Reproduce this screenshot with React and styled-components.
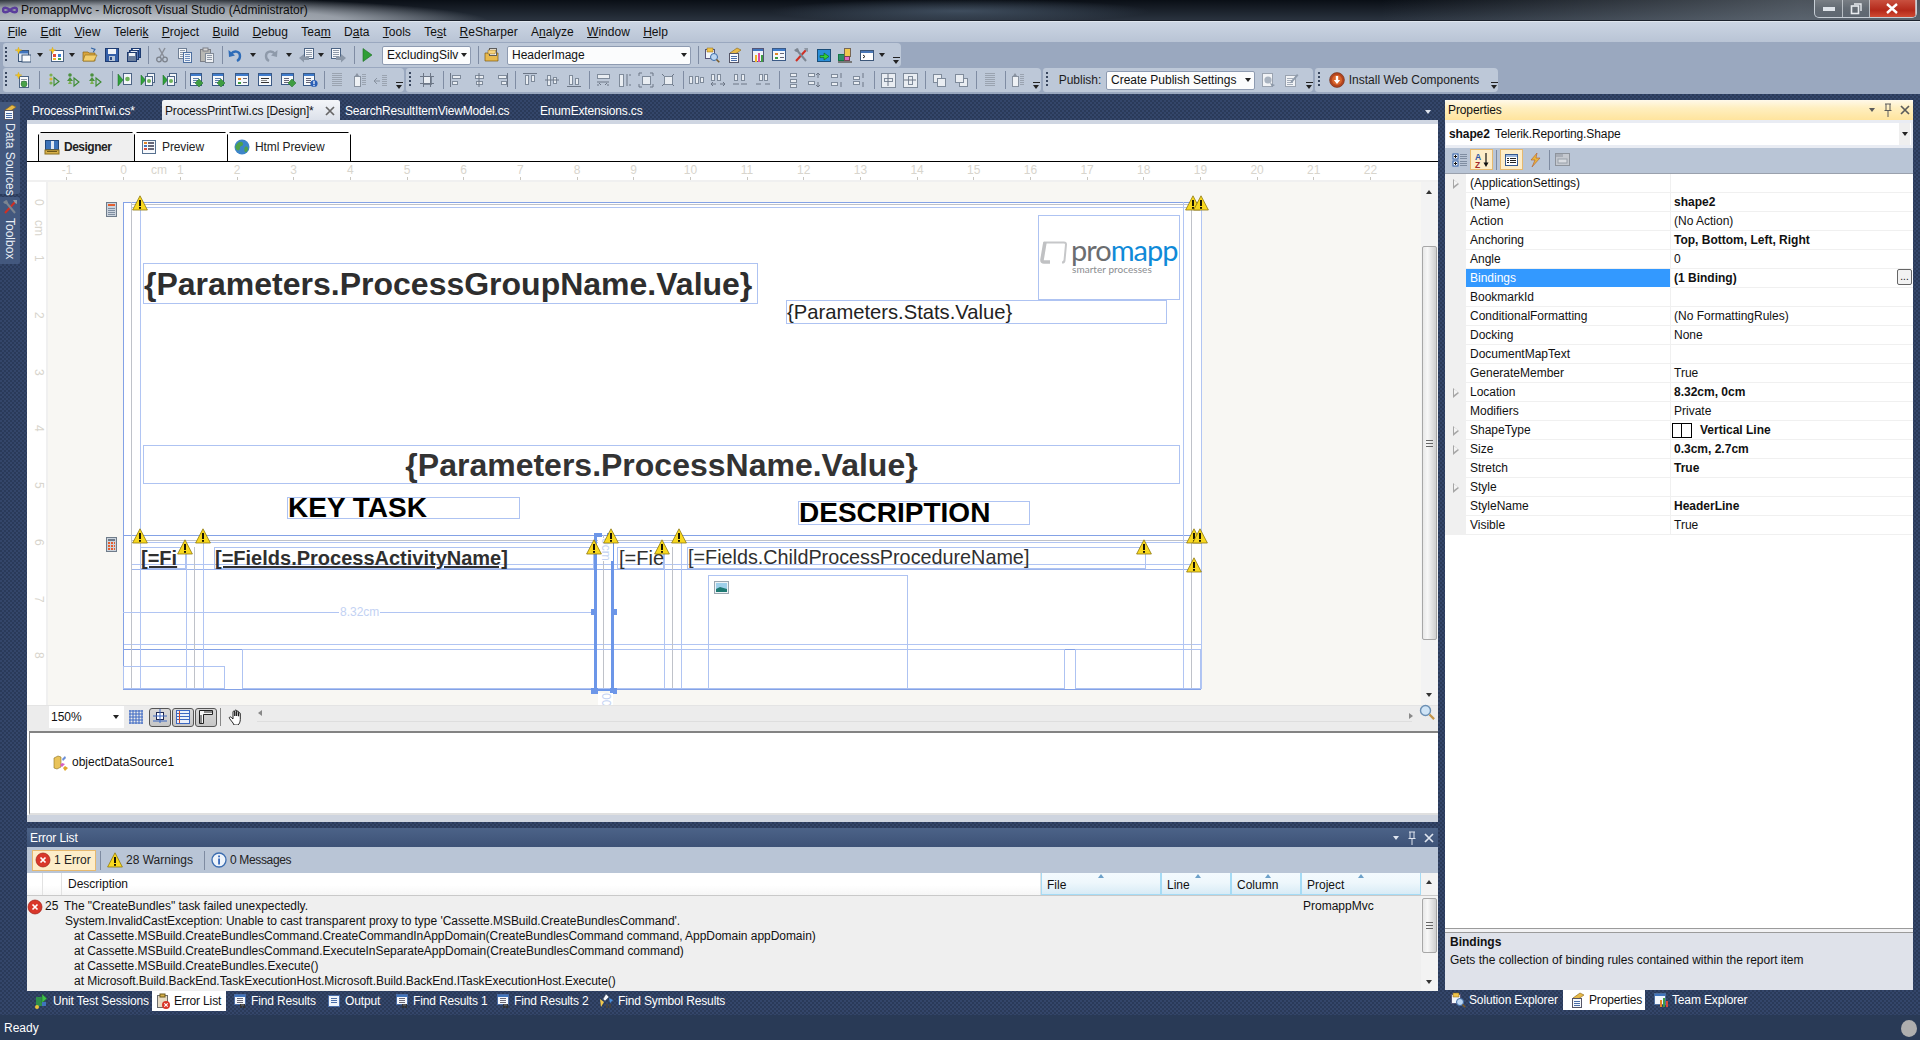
import React from 'react';
import styled, { createGlobalStyle } from 'styled-components';

const UI = '"Liberation Sans", Arial, sans-serif';

const Global = createGlobalStyle`
  html, body { margin: 0; padding: 0; background: #2b3b5a; }
  body { font-family: ${UI}; font-size: 12px; overflow: hidden; }
  * { box-sizing: border-box; }
`;

const DOCK = `
  background-color: #2a3a59;
  background-image:
    linear-gradient(45deg, #34466a 25%, transparent 25%, transparent 75%, #34466a 75%),
    linear-gradient(45deg, #34466a 25%, transparent 25%, transparent 75%, #34466a 75%);
  background-size: 4px 4px;
  background-position: 0 0, 2px 2px;
`;

/* ---------- window chrome ---------- */
const Shell = styled.div`
  width: 1920px; height: 1040px; display: flex; flex-direction: column; overflow: hidden; position: relative;
`;
const TitleBar = styled.div`
  height: 22px; flex: none; position: relative; display: flex; align-items: center; padding: 0 0 2px 2px; gap: 3px;
  border-bottom: 1px solid #dfe6ee;
  box-shadow: inset 0 -1px 0 #1b222c;
  background:
    radial-gradient(ellipse 380px 26px at 110px 22px, rgba(205,210,216,.95), rgba(190,196,204,.75) 62%, rgba(150,160,170,0) 100%),
    radial-gradient(ellipse 190px 12px at 960px 11px, rgba(92,112,134,.55), rgba(92,112,134,0)),
    linear-gradient(to right, rgba(130,140,150,0) 1380px, rgba(130,140,150,.55) 1800px) ,
    linear-gradient(#0a0f16, #2b3440);
`;
const TitleText = styled.span`font-size: 12px; letter-spacing: .03px; color: #0c0c0c; white-space: nowrap;`;
const WinButtons = styled.div`
  position: absolute; right: 3px; top: 0; width: 103px; height: 18px; display: flex;
  border: 1px solid #c7ced6; border-top: 0; border-radius: 0 0 5px 5px; overflow: hidden;
`;
const WinBtn = styled.div`
  width: ${p => p.$w}px; height: 100%; display: flex; align-items: center; justify-content: center;
  color: #fff; border-right: 1px solid rgba(220,225,230,.7);
  background: ${p => p.$red ? 'linear-gradient(#c9503f, #b4291a 60%, #d04a33)' : 'linear-gradient(rgba(255,255,255,.25), rgba(255,255,255,.1) 50%, rgba(255,255,255,.04))'};
`;
const MenuBar = styled.div`
  height: 20px; flex: none; padding-left: 1px; display: flex; align-items: center;
  background: linear-gradient(#cbd5e3, #b9c4d5);
`;
const MenuItem = styled.span`padding: 0 ${p => p.$p ?? 6.7}px; color: #111; font-size: 12px; white-space: nowrap;`;
const ToolArea = styled.div`
  height: 52px; flex: none; background: #9aa8bf; padding: 1px 0 0 3px; display: flex; flex-direction: column; gap: 1px;
`;
const ToolRow = styled.div`display: flex; gap: 2px; height: 24px;`;
const Band = styled.div`
  width: ${p => p.$w}px; height: 24px; display: flex; align-items: center; position: relative;
  background: #bdc8d8; border-radius: 3px 4px 4px 3px;
`;
const Cell = styled.div`
  flex: none; height: 100%; display: flex; align-items: center; justify-content: center; color: #1d1d1d; font-size: 12px; white-space: nowrap;
`;
const Sep = styled.div`width: 1px; height: 18px; background: #7f8ca3;`;
const Grip = styled.div`
  width: 2px; height: 16px;
  background: repeating-linear-gradient(#39475f 0 2px, transparent 2px 4px);
`;
const Combo = styled.div`
  width: 100%; height: 19px; background: #fbfcfd; border: 1px solid #8e9bb1; border-radius: 2px; display: flex; align-items: center; justify-content: space-between; padding: 0 3px 0 4px; font-size: 12px; color: #111;
`;
const Caret = styled.i`
  width: 0; height: 0; display: inline-block; flex: none; border-left: 3px solid transparent; border-right: 3px solid transparent; border-top: 4px solid ${p => p.$c || '#222'};
`;
const Over = styled.div`
  align-self: flex-end; margin-bottom: 3px; width: 7px; height: 7px; border-top: 1px solid #222; position: relative;
  &::after { content: ''; position: absolute; left: 0; top: 2px; border-left: 3.5px solid transparent; border-right: 3.5px solid transparent; border-top: 4px solid #222; }
`;

/* ---------- dock ---------- */
const Dock = styled.div`
  flex: 1; min-height: 0; display: flex; ${DOCK} padding-top: 6px;
`;
const Rail = styled.div`width: 27px; flex: none; display: flex; flex-direction: column; gap: 3px; padding-top: 2px;`;
const RailTab = styled.div`
  width: 20px; height: ${p => p.$h}px; background: #43587e; color: #e8edf5; font-size: 12px; border-radius: 0 2px 2px 0;
  display: flex; flex-direction: column; align-items: center; gap: 3px; padding-top: 2px;
  span { writing-mode: vertical-rl; white-space: nowrap; }
`;
const CenterCol = styled.div`width: 1411px; flex: none; display: flex; flex-direction: column;`;
const RightCol = styled.div`width: 468px; flex: none; margin-left: 7px; display: flex; flex-direction: column;`;

const DocPane = styled.div`height: 722px; flex: none; display: flex; flex-direction: column;`;
const DocTabs = styled.div`height: 20px; flex: none; display: flex; align-items: center; position: relative;`;
const DocTab = styled.div`
  width: ${p => p.$w}px; height: 20px; flex: none; display: flex; align-items: center; justify-content: space-between;
  padding: 1px 3px 0 ${p => p.$pl}px; font-size: 12px; letter-spacing: -0.17px; white-space: nowrap;
  color: ${p => p.$on ? '#141414' : '#fff'};
  background: ${p => p.$on ? 'linear-gradient(#f4f6f9, #dce1ea)' : 'transparent'};
  border-radius: 2px 2px 0 0;
`;
const TabMenu = styled.div`position: absolute; right: 7px; top: 10px; line-height: 0;`;
const DocBody = styled.div`flex: 1; min-height: 0; display: flex; flex-direction: column; background: #fff; border-top: 4px solid #cfd6e2; border-bottom: 7px solid #ced4df;`;
const ViewTabs = styled.div`
  height: 38px; flex: none; display: flex; align-items: flex-end; padding-left: 11px; border-bottom: 1px solid #000;
`;
const ViewTab = styled.div`
  width: ${p => p.$w}px; height: 29px; display: flex; align-items: center; gap: ${p => p.$on ? 4 : 5}px; padding-left: ${p => p.$on ? 5 : 6}px; font-size: 12px; color: #222;
  font-weight: ${p => p.$on ? 700 : 400}; letter-spacing: ${p => p.$on ? '-.5px' : '-.1px'};
  background: ${p => p.$on ? '#efefef' : '#fff'};
  border: 1px solid #000; border-bottom: 0; margin-right: -1px;
  clip-path: polygon(3px 0, calc(100% - 3px) 0, 100% 3px, 100% 100%, 0 100%, 0 3px);
`;
const RulerRow = styled.div`
  height: 20px; flex: none; position: relative; display: flex; padding-left: 11.66px; border-bottom: 2px solid #f0f0f0; background: #fff;
`;
const RulerCell = styled.div`
  width: 56.68px; flex: none; display: flex; flex-direction: column; align-items: center; color: #d8d5cd; font-size: 12px; line-height: 14px; padding-top: 1px;
  &::after { content: ''; width: 1px; height: 3px; background: #c9c6bf; }
`;
const RulerCm = styled.span`position: absolute; left: 124px; top: 1px; color: #d8d5cd; font-size: 12px; line-height: 14px;`;
const CanvasRow = styled.div`flex: 1; min-height: 0; display: flex;`;
const SideRuler = styled.div`
  width: 21px; flex: none; border-right: 2px solid #f0f0f0; position: relative; overflow: hidden;
`;
const SideCell = styled.div`
  height: 56.72px; display: flex; align-items: center; gap: 2px; padding-left: 5px; color: #d8d5cd; font-size: 12px;
  &:first-child { margin-top: -8.5px; }
  span { writing-mode: vertical-rl; width: 13px; line-height: 13px; }
  &::after { content: ''; width: 3px; height: 1px; background: #c9c6bf; }
`;
const SideCm = styled.span`position: absolute; left: 5px; top: 38px; color: #d8d5cd; font-size: 12px; writing-mode: vertical-rl; line-height: 13px;`;
const Canvas = styled.div`flex: 1; min-width: 0; background: #f8f7f3; position: relative; overflow: hidden;`;
const VScroll = styled.div`
  width: ${p => p.$w || 17}px; flex: none; background: #f3f3f3; position: relative;
`;
const ScrollThumb = styled.div`
  position: absolute; left: 1px; right: 1px; top: ${p => p.$t}px; height: ${p => p.$h}px; border: 1px solid #a7a7a7; border-radius: 2px;
  background: linear-gradient(to right, #e8e8e8, #f7f7f7 35%, #cfcfcf);
  display: flex; align-items: center; justify-content: center;
  &::after { content: ''; width: 7px; height: 7px; background: repeating-linear-gradient(#666 0 1px, transparent 1px 3px); }
`;
const ScrollUp = styled.div`
  position: absolute; left: 5px; top: ${p => p.$t}px; border-left: 3.5px solid transparent; border-right: 3.5px solid transparent; border-bottom: 4px solid #333;
`;
const ScrollDown = styled.div`
  position: absolute; left: 5px; top: ${p => p.$t}px; border-left: 3.5px solid transparent; border-right: 3.5px solid transparent; border-top: 4px solid #333;
`;

/* free canvas of the report: coordinates are those of the designer surface */
const OX = 48, OY = 182;
const Sheet = styled.div`
  position: absolute; left: ${123 - OX}px; top: ${202 - OY}px; width: ${1201 - 123}px; height: ${689 - 202}px; background: #fff;
`;
const Rule = styled.div`
  position: absolute; background: ${p => p.$c};
  left: ${p => p.$x - OX}px; top: ${p => p.$y - OY}px; width: ${p => p.$w}px; height: ${p => p.$h}px;
`;
const RBox = styled.div`
  position: absolute; border: 1px solid #aec3f2; white-space: nowrap;
  left: ${p => p.$x - OX}px; top: ${p => p.$y - OY}px; width: ${p => p.$w}px; height: ${p => p.$h}px;
  display: flex; align-items: center; justify-content: ${p => p.$center ? 'center' : 'flex-start'};
  font-family: ${UI}; font-size: ${p => p.$fs || 12}px; font-weight: ${p => p.$b ? 700 : 400}; color: ${p => p.$col || '#2f2f2f'};
  padding-left: ${p => p.$pl || 0}px; text-decoration: ${p => p.$u ? 'underline' : 'none'}; line-height: 1;
`;
const Marker = styled.div`
  position: absolute; left: ${p => p.$x - OX - 8}px; top: ${p => p.$y - OY - 7.5}px; width: 16px; height: 15px; line-height: 0;
`;
const Floating = styled.div`
  position: absolute; left: ${p => p.$x - OX}px; top: ${p => p.$y - OY}px; line-height: 0;
`;
const Handle = styled.div`
  position: absolute; background: #6c96e8; left: ${p => p.$x - OX}px; top: ${p => p.$y - OY}px; width: ${p => p.$w}px; height: ${p => p.$h}px;
`;
const DimLabel = styled.span`
  position: absolute; left: ${p => p.$x - OX}px; top: ${p => p.$y - OY}px; background: #fff; color: #c3d2f3; font-size: 12px; line-height: 13px; padding: 0 1px;
  writing-mode: ${p => p.$v ? 'vertical-rl' : 'horizontal-tb'};
`;
const Logo = styled.div`
  position: absolute; left: ${1071 - OX}px; top: ${236 - OY}px; font-family: "Lato", sans-serif;
`;
const LogoWord = styled.div`
  font-size: 29px; line-height: 28px; letter-spacing: -1px; color: #6b6d70; font-weight: 400; span { color: #0f8ad8; }
`;
const LogoTag = styled.div`font-size: 10px; line-height: 10px; color: #8b8d90; padding-left: 1px; letter-spacing: .05px;`;

const ZoomStrip = styled.div`
  height: 26px; flex: none; background: #ececec; display: flex; align-items: center; position: relative; padding: 0 0 3px 22px; border-top: 1px solid #e4e4e4;
  &::after { content: ''; position: absolute; left: 230px; right: 26px; top: 15px; height: 1px; background: #dedede; }
`;
const ZoomBox = styled.div`
  width: 75px; height: 22px; background: #fff; display: flex; align-items: center; justify-content: space-between; padding: 0 5px 0 2px; font-size: 12px; color: #111;
`;
const ZoomGrid = styled.div`margin-left: 4px; line-height: 0;`;
const ZToggle = styled.div`
  width: 22px; height: 19px; margin-left: ${p => p.$ml ?? 1}px; border: 1px solid #555; border-radius: 3px; background: linear-gradient(#d8d8d8, #c6c6c6);
  display: flex; align-items: center; justify-content: center; line-height: 0;
`;
const ZSep = styled.div`width: 1px; height: 18px; background: #888; margin: 0 6px 0 3px;`;
const HandWrap = styled.div`line-height: 0; width: 16px; margin-right: 15px;`;
const ArrowL = styled.i`position: relative; top: -4px; border-top: 3.5px solid transparent; border-bottom: 3.5px solid transparent; border-right: 4px solid #888;`;
const ZoomEnd = styled.div`
  position: absolute; right: 3px; top: -2px; display: flex; align-items: flex-start; gap: 6px; line-height: 0; z-index: 1;
  i { margin-top: 9px; border-top: 3.5px solid transparent; border-bottom: 3.5px solid transparent; border-left: 4px solid #888; }
`;
const Tray = styled.div`
  height: 84px; flex: none; margin-left: 2px; border-top: 2px solid #838383; border-left: 1px solid #8a8a8a; background: #fff; display: flex; align-items: flex-start; gap: 3px; padding: 22px 0 0 23px;
  font-size: 12px; color: #111; border-bottom: 2px solid #e0e0e0;
`;

/* ---------- error list ---------- */
const ErrPanel = styled.div`
  height: 163px; flex: none; margin-top: 6px; display: flex; flex-direction: column;
`;
const PanelHead = styled.div`
  height: 19px; flex: none; background: linear-gradient(#4c6388, #3d5277); color: #fff; font-size: 12px; letter-spacing: -.1px; display: flex; align-items: center; justify-content: space-between; padding: 0 2px 0 3px;
`;
const PanelCtl = styled.div`display: flex; align-items: center; gap: 3px; line-height: 0; i { margin-right: 3px; }`;
const ErrBar = styled.div`
  height: 26px; flex: none; background: #b9c5d6; display: flex; align-items: center; padding-left: 5px; font-size: 12px; color: #222;
`;
const ErrBtn = styled.div`
  height: 21px; width: ${p => p.$w}px; display: flex; align-items: center; gap: 3px; padding-left: ${p => p.$on ? 2 : 0}px; margin-left: ${p => p.$ml || 0}px; white-space: nowrap; flex: none;
  letter-spacing: ${p => p.$ls || 0}px;
  ${p => p.$on ? 'background: #fdedc9; border: 1px solid #e6b96f;' : ''}
`;
const ErrSep = styled.div`width: 1px; height: 19px; background: #7e8ba1; margin: ${p => p.$m}; flex: none;`;
const GridHead = styled.div`
  height: 23px; flex: none; display: flex; background: linear-gradient(#fff, #fff 55%, #f6f6f6); border-bottom: 1px solid #c9c9c9;
`;
const HeadCell = styled.div`
  width: ${p => p.$w}px; flex: none; font-size: 12px; color: #111; display: flex; align-items: center; padding-left: ${p => p.$pl ?? 6}px; position: relative;
  ${p => p.$blue
    ? 'background: linear-gradient(#f3fafe, #eef7fc 45%, #d8ebf6); border: 1px solid #a5dbf5; border-width: 0 1px 1px 1px; padding-top: 3px;'
    : 'border-right: 1px solid #e2e2e2;'}
`;
const SortMark = styled.i`
  position: absolute; left: ${p => p.$l}px; top: 1px; border-left: 3px solid transparent; border-right: 3px solid transparent; border-bottom: 4px solid #6da1c9;
`;
const ErrBodyRow = styled.div`flex: 1; min-height: 0; display: flex; background: #efefef;`;
const ErrBody = styled.div`flex: 1; min-width: 0; padding: 3px 0 0 0; position: relative;`;
const ErrLine = styled.div`
  height: 15px; line-height: 15px; font-size: 12px; letter-spacing: -.04px; color: #111; white-space: nowrap; padding-left: ${p => p.$in}px; display: flex; align-items: center;
`;
const ErrNum = styled.span`width: 19px; margin-left: 2px;`;
const ErrMark = styled.span`line-height: 0; margin-left: 0; width: 16px;`;
const ErrProject = styled.span`position: absolute; left: 1276px; top: 3px; line-height: 15px; color: #111;`;
const HeadScroll = styled.div`width: 17px; flex: none; background: #f3f3f3; position: relative;`;

/* ---------- bottom tabs ---------- */
const TabStrip = styled.div`height: 20px; flex: none; display: flex; align-items: flex-start; padding-left: ${p => p.$pl}px;`;
const StripTab = styled.div`
  height: 20px; width: ${p => p.$w}px; flex: none; display: flex; align-items: center; gap: ${p => p.$gap ?? 3}px; padding-left: ${p => p.$pl ?? 4}px; font-size: 12px; letter-spacing: -.15px; white-space: nowrap;
  color: ${p => p.$on ? '#111' : '#fff'}; background: ${p => p.$on ? '#fff' : 'transparent'};
`;
const Status = styled.div`
  height: 25px; flex: none; background: #293a56; color: #fff; font-size: 12px; display: flex; align-items: center; padding-left: 4px; position: relative;
`;
const Gripper = styled.div`
  position: absolute; right: 3px; top: 5px; width: 16px; height: 17px; border-radius: 50%; background: #aeaeae;
`;

/* ---------- properties ---------- */
const PropPanel = styled.div`
  height: 890px; flex: none; display: flex; flex-direction: column; background: #fff;
`;
const PropHead = styled.div`
  height: 20px; flex: none; background: linear-gradient(#fff9ea, #ffefc0 40%, #ffe49d); font-size: 12px; letter-spacing: -.1px; color: #111; display: flex; align-items: center; justify-content: space-between; padding: 0 1px 0 3px; border-radius: 2px 2px 0 0;
`;
const ObjBar = styled.div`
  height: 28px; flex: none; padding: 3px 2px 2px 1px; background: #e9ecf3;
`;
const ObjCombo = styled.div`
  height: 22px; background: #fff; display: flex; align-items: center; font-size: 12px; letter-spacing: -.1px; color: #111; padding-left: 3px; gap: 5px; position: relative; b { font-weight: 700; }
`;
const ObjDrop = styled.div`
  position: absolute; right: 1px; top: 0; width: 11px; height: 100%; background: #efefef; display: flex; align-items: center; justify-content: center;
`;
const PropTools = styled.div`
  height: 26px; flex: none; background: #b9c5d6; display: flex; align-items: center; padding: 0 0 2px 5px; border-bottom: 1px solid #9aa1ad;
`;
const PropTool = styled.div`
  width: ${p => p.$w}px; height: 21px; flex: none; display: flex; align-items: center; justify-content: center; line-height: 0; margin-left: ${p => p.$ml || 0}px;
  ${p => p.$on ? 'background: #fdedc9; border: 1px solid #e6b96f;' : ''}
`;
const PropSep = styled.div`width: 1px; height: 20px; background: #7e8ba1; margin: ${p => p.$m};`;
const PropGrid = styled.div`flex: 1; min-height: 0; background: #fff;`;
const PropRow = styled.div`display: flex; height: 19px; font-size: 12px; color: #111;`;
const Gutter = styled.div`
  width: 21px; flex: none; background: #f0f0f0; display: flex; align-items: center; padding-left: 8px;
  i { border-top: 5px solid transparent; border-bottom: 5px solid transparent; border-left: 6px solid #a6a6a6; position: relative;
    &::after { content: ''; position: absolute; left: -5px; top: -3.5px; border-top: 3.5px solid transparent; border-bottom: 3.5px solid transparent; border-left: 4px solid #f4f4f4; } }
`;
const PropName = styled.div`
  width: 205px; flex: none; padding-left: 4px; display: flex; align-items: center; border-bottom: 1px solid #f0f0f0; border-right: 1px solid #f0f0f0;
  ${p => p.$sel ? 'background: #3399ff; color: #fff; border-bottom-color: #fff;' : ''}
`;
const PropVal = styled.div`
  flex: 1; min-width: 0; padding-left: 3px; display: flex; align-items: center; border-bottom: 1px solid #f0f0f0; position: relative; font-weight: ${p => p.$b ? 700 : 400};
`;
const MoreBtn = styled.div`
  position: absolute; right: 1px; top: 0; width: 15px; height: 16px; border: 1px solid #666; border-radius: 2px; background: #f2f2f2; font-size: 10px; line-height: 14px; text-align: center; font-weight: 400;
`;
const ShapeSwatch = styled.div`
  width: 20px; height: 15px; margin: 0 8px 0 -2px; border: 1px solid #000; position: relative;
  &::after { content: ''; position: absolute; left: 8px; top: 0; bottom: 0; width: 1px; background: #000; }
`;
const DescPane = styled.div`
  height: 62px; flex: none; border-top: 1px solid #9b9b9b; background: #dfe2ea; padding: 6px 0 0 5px; font-size: 12px; color: #111;
  box-shadow: inset 0 3px 0 #f3f3f5, inset 0 4px 0 #9b9b9b;
  div { line-height: 15px; } div:first-child { font-weight: 700; margin-bottom: 3px; }
`;

/* ---------- icons ---------- */
const Svg = ({ s = 16, w, h, children }) => <svg width={w || s} height={h || s} viewBox={`0 0 ${w || s} ${h || s}`} style={{ display: 'block', flex: 'none' }}>{children}</svg>;
const R = (x, y, w, h, f, st) => <rect key={`${x}-${y}-${w}-${h}-${f}`} x={x} y={y} width={w} height={h} fill={f} stroke={st || 'none'} />;

const Spark = () => <path d="M3.5 0l.8 2.4L7 3l-2.3 1.1L3.5 7 2.6 4.1 0 3l2.7-.6z" fill="#f5c518" stroke="#c79a10" strokeWidth=".3" />;
const Diamond = ({ x = 10, y = 11, c = '#3f9d42' }) => <path d={`M${x} ${y - 4}l4 4-4 4-4-4z`} fill={c} stroke="#1f6b24" strokeWidth=".5" />;
const Doc = ({ x = 3, y = 1, w = 10, h = 13 }) => <rect x={x + .5} y={y + .5} width={w} height={h} fill="#f6f8fb" stroke="#4c6484" />;
const GrayLines = ({ x = 5, y = 4, n = 5, w = 6, c = '#8f9aa9' }) => <>{Array.from({ length: n }, (_, i) => R(x, y + i * 2, w, 1, c))}</>;

const icons = {
  newproj: <><rect x="3.5" y="3.5" width="10" height="11" fill="#e4ecf6" stroke="#3c5678" /><rect x="4" y="4" width="9" height="2.5" fill="#3f74bd" /><rect x="7" y="8" width="9" height="7" fill="#f8fafc" stroke="#3c5678" /><Spark /></>,
  newitem: <><rect x="2.5" y="3.5" width="12" height="11" fill="#fff" stroke="#4c6484" />{R(4, 7, 3, 3, '#e14b3b')}{R(9, 7, 3, 3, '#3a7fd0')}{R(4, 11, 3, 2, '#f0b429')}{R(9, 11, 3, 2, '#4aa14a')}<Spark /></>,
  open: <><path d="M1 5h5l1 1h6v8H1z" fill="#d9a53d" stroke="#8a6516" strokeWidth=".7" /><path d="M3 8h12l-3 6H1z" fill="#f3cf6e" stroke="#9a741d" strokeWidth=".7" /><path d="M9 1l4 1.4-1.8 2.8" stroke="#3465a4" strokeWidth="1.1" fill="none" /></>,
  save: <><rect x="1.5" y="1.5" width="13" height="13" fill="#3560a8" stroke="#1e3b70" />{R(4, 2, 8, 5, '#f1f4f8')}{R(5, 9, 6, 5, '#b9c7d9')}{R(6, 10, 2, 3, '#2a4b85')}</>,
  saveall: <><rect x="5.5" y="1.5" width="9" height="9" fill="#3560a8" stroke="#1e3b70" />{R(7, 2, 6, 3, '#f1f4f8')}<rect x="3.5" y="3.5" width="9" height="9" fill="#5b79b4" stroke="#1e3b70" />{R(5, 4, 6, 3, '#e1e7f0')}<rect x="1.5" y="5.5" width="9" height="9" fill="#6b7f9e" stroke="#1e3b70" />{R(3, 6, 6, 3, '#f1f4f8')}</>,
  cut: <><path d="M5 1l5 9M11 1L6 10" stroke="#8a8f99" strokeWidth="1.5" /><circle cx="5" cy="12.5" r="2.3" fill="none" stroke="#7c828c" strokeWidth="1.3" /><circle cx="11" cy="12.5" r="2.3" fill="none" stroke="#7c828c" strokeWidth="1.3" /></>,
  copy: <><rect x="1.5" y="1.5" width="8" height="10" fill="#f4f6f9" stroke="#6f7f95" />{GrayLines({ x: 3, y: 3, n: 4, w: 5 })}<rect x="6.5" y="5.5" width="8" height="10" fill="#eef2f7" stroke="#4d6f9f" />{GrayLines({ x: 8, y: 7, n: 4, w: 5, c: '#6d8dbd' })}</>,
  paste: <><rect x="1.5" y="2.5" width="10" height="12" fill="#b8b8b4" stroke="#7c7f86" />{R(4, 1, 5, 3, '#d8d8d8', '#7c7f86')}<rect x="6.5" y="6.5" width="8" height="9" fill="#eef0f3" stroke="#818b99" />{GrayLines({ x: 8, y: 8, n: 3, w: 5 })}</>,
  undo: <><path d="M4 7c3-4 9-3 9 2 0 2-1 4-3 5" fill="none" stroke="#2e6cb8" strokeWidth="2.4" /><path d="M1.5 3l.5 7 6-1.4z" fill="#2e6cb8" /></>,
  redo: <><path d="M12 7C9 3 3 4 3 9c0 2 1 4 3 5" fill="none" stroke="#8e9aaa" strokeWidth="2.4" /><path d="M14.5 3l-.5 7-6-1.4z" fill="#8e9aaa" /></>,
  back: <><Doc x={5} y={1} w={9} h={10} />{GrayLines({ x: 7, y: 3, n: 4 })}<path d="M0 11l5-4v2.5h5V13H5v2.4z" fill="#8c98a8" /></>,
  fwd: <><Doc x={1} y={1} w={9} h={10} />{GrayLines({ x: 3, y: 3, n: 4 })}<path d="M16 11l-5-4v2.5H6V13h5v2.4z" fill="#8c98a8" /></>,
  play: <><path d="M4 1.5l9 6.5-9 6.5z" fill="#2f9e36" stroke="#1c6b22" strokeWidth=".6" /></>,
  folderdoc: <><path d="M1 6h13v8H1z" fill="#e8b94c" stroke="#7d5a12" strokeWidth=".7" /><rect x="5.5" y="1.5" width="7" height="7" fill="#fff" stroke="#5d5d5d" /><path d="M4 3h8l-1 4H4z" fill="#f6d27b" stroke="#7d5a12" strokeWidth=".5" /></>,
  solution: <><rect x="1.5" y="2.5" width="9" height="9" fill="#f2f5f9" stroke="#557" /><path d="M3 1h6v4H3z" fill="#f0c44b" stroke="#8a6516" strokeWidth=".5" /><circle cx="10" cy="10" r="3.5" fill="#bcd6f2" stroke="#3e6da8" /><path d="M12.5 12.5l2.8 2.8" stroke="#7b5c28" strokeWidth="1.6" /></>,
  props: <><path d="M3 6l7-5 4 2-7 5z" fill="#e7b948" stroke="#8a6516" strokeWidth=".6" /><rect x="2.5" y="6.5" width="9" height="9" fill="#f7f9fc" stroke="#556" />{GrayLines({ x: 4, y: 9, n: 3, w: 6, c: '#4a6da7' })}</>,
  team: <><rect x="1.5" y="1.5" width="11" height="11" fill="#f0f5fb" stroke="#4d6f9f" />{R(2, 2, 10, 2, '#3f74bd')}{R(7, 8, 2, 7, '#e0862a')}{R(10, 6, 2, 9, '#3f9d42')}{R(13, 9, 2, 6, '#d34a3c')}</>,
  report: <><rect x="2.5" y="1.5" width="11" height="13" fill="#eef3f9" stroke="#557" />{R(3, 2, 10, 2, '#3f74bd')}{R(8, 6, 2, 9, '#e14b9b')}{R(11, 8, 2, 7, '#3f9d42')}{R(5, 8, 2, 7, '#f0b429')}</>,
  tools: <><path d="M3 14L13 3" stroke="#cf2f24" strokeWidth="2" /><path d="M3 2l10 12" stroke="#7c8591" strokeWidth="2" /><path d="M1 3l4-2 1 3-3 1z" fill="#7c8591" /><path d="M11 1h4v4l-2-1z" fill="#8d97a3" /></>,
  browser: <><rect x="1.5" y="2.5" width="13" height="12" fill="#2a8ed8" stroke="#1a4d78" /><path d="M4 8.5h4V6l5 3.5L8 13v-2.4H4z" fill="#2fd13a" stroke="#0f5c14" strokeWidth=".6" /></>,
  build: <><rect x="1.5" y="7.5" width="6" height="6" fill="#2f8f6a" stroke="#174" /><rect x="7.5" y="1.5" width="6" height="8" fill="#f0c84d" stroke="#765" /><rect x="7.5" y="9.5" width="5" height="4" fill="#e068c6" stroke="#745" />{R(1, 14, 14, 2, '#777')}</>,
  cmd: <><rect x="1.5" y="3.5" width="13" height="10" fill="#fff" stroke="#3c5678" />{R(2, 4, 12, 2, '#4b78b7')}<path d="M4 8l2 1.5L4 11" fill="none" stroke="#222" /></>,
  sparkdoc: <><rect x="4.5" y="4.5" width="9" height="11" fill="#f8f9fb" stroke="#4c6484" />{GrayLines({ x: 6, y: 7, n: 3 })}<Spark /><circle cx="9" cy="12" r="3" fill="#4aa14a" stroke="#1f6b24" strokeWidth=".5" /></>,
  t1: <><circle cx="6" cy="3" r="1.6" fill="#7bb04e" /><circle cx="6" cy="7" r="1.6" fill="#d9b23a" /><circle cx="6" cy="11" r="1.6" fill="#7bb04e" /><path d="M9 5.5l5 4-5 4z" fill="none" stroke="#3c8a30" strokeWidth="1.1" /></>,
  t2: <><circle cx="5" cy="3" r="1.8" fill="#4a8f3d" /><path d="M2 9l3-4 3 4z" fill="#4a8f3d" /><path d="M3 12l2-4 2 4z" fill="#7bb04e" /><path d="M9 6l5 4-5 4z" fill="none" stroke="#3c8a30" strokeWidth="1.1" /></>,
  t3: <><path d="M1 2l5 6-5 6z" fill="#2fa13a" stroke="#186b20" strokeWidth=".5" /><rect x="6.5" y="1.5" width="8" height="11" fill="#f3f6f9" stroke="#4c6484" /><circle cx="10.5" cy="7" r="2.3" fill="#6db15a" /></>,
  t4: <><path d="M1 3l4.5 5L1 13z" fill="#2fa13a" stroke="#186b20" strokeWidth=".5" /><rect x="7.5" y="1.5" width="7" height="9" fill="#f3f6f9" stroke="#4c6484" /><rect x="5.5" y="4.5" width="7" height="9" fill="#f3f6f9" stroke="#4c6484" /><circle cx="9" cy="9" r="2" fill="#6db15a" /></>,
  w1: <><rect x="1.5" y="1.5" width="11" height="12" fill="#f5f8fb" stroke="#3b5a86" />{R(2, 2, 10, 2, '#3f7bca')}{GrayLines({ x: 4, y: 6, n: 3, w: 6, c: '#5f7ea8' })}<Diamond x={10} y={11} /></>,
  w2: <><rect x="1.5" y="1.5" width="13" height="12" fill="#f5f8fb" stroke="#3b5a86" />{R(2, 2, 12, 2, '#3f7bca')}{R(4, 6, 3, 2, '#e0862a')}{R(9, 6, 4, 1, '#667')}{R(4, 10, 3, 2, '#3f9d42')}{R(9, 10, 4, 1, '#667')}</>,
  w3: <><rect x="1.5" y="1.5" width="13" height="12" fill="#f5f8fb" stroke="#3b5a86" />{R(2, 2, 12, 2, '#3f7bca')}{R(4, 6, 8, 1, '#333')}{R(4, 8, 6, 1, '#888')}{R(4, 10, 8, 1, '#333')}</>,
  w4: <><rect x="1.5" y="1.5" width="12" height="11" fill="#f5f8fb" stroke="#3b5a86" />{R(2, 2, 11, 2, '#3f7bca')}{GrayLines({ x: 4, y: 6, n: 3, w: 5, c: '#667' })}<Diamond x={12} y={11} /></>,
  w5: <><rect x="1.5" y="1.5" width="11" height="12" fill="#f5f8fb" stroke="#3b5a86" />{R(2, 2, 10, 2, '#3f7bca')}{GrayLines({ x: 4, y: 6, n: 3, w: 5, c: '#667' })}<circle cx="12" cy="11.5" r="3.6" fill="#2a5fb6" /><rect x="11.4" y="8.8" width="1.2" height="3.4" fill="#fff" /><rect x="11.4" y="13" width="1.2" height="1.2" fill="#fff" /></>,
  lines1: <>{GrayLines({ x: 3, y: 1, n: 7, w: 10, c: '#9aa3b0' })}</>,
  lines2: <><rect x="2.5" y="4.5" width="6" height="10" fill="#eef1f5" stroke="#8892a0" />{GrayLines({ x: 10, y: 2, n: 6, w: 4, c: '#9aa3b0' })}<path d="M5 1l-2 3h4z" fill="#8892a0" /></>,
  lines3: <><path d="M7 9H1m3-3L1 9l3 3" fill="none" stroke="#8892a0" />{GrayLines({ x: 9, y: 3, n: 6, w: 5, c: '#9aa3b0' })}</>,
  globe: <><circle cx="8" cy="8" r="7.5" fill="#3d85c9" /><path d="M3 5c2-3 6-3 6 0s-3 1-3 4-3 3-4 1-1-3 1-5zM11 8c2-1 3 0 3 2s-2 4-3 3-1-4 0-5z" fill="#4ea24a" /></>,
  designer: <><rect x="1.5" y="1.5" width="13" height="9" fill="#3b72b9" stroke="#20477a" />{R(7, 2, 3, 8, '#dfe8f3')}{R(1, 11, 14, 4, '#d8b14a', '#8a6f1f')}{GrayLines({ x: 3, y: 12, n: 1, w: 10, c: '#6d5818' })}</>,
  preview: <><rect x="1.5" y="1.5" width="13" height="13" fill="#f7f9fc" stroke="#56708f" />{R(3, 3, 3, 2, '#e0862a')}{R(7, 3, 6, 2, '#667')}{R(3, 6, 3, 2, '#3f74bd')}{R(7, 6, 6, 2, '#667')}{R(3, 9, 3, 2, '#d34a3c')}{R(7, 9, 6, 2, '#667')}</>,
  section: <><rect x=".5" y=".5" width="10" height="14" fill="#ccd4dd" stroke="#6f7c8a" />{R(2, 2, 7, 2, '#e45f2f')}{GrayLines({ x: 2, y: 6, n: 4, w: 7, c: '#7f8ea0' })}</>,
  sectionR: <><rect x=".5" y=".5" width="10" height="14" fill="#ccd4dd" stroke="#6f7c8a" />{R(2, 2, 7, 2, '#6f7c8a')}{R(2, 5, 2, 2, '#e45f2f')}{R(5, 5, 2, 2, '#e45f2f')}{R(8, 5, 1, 2, '#e45f2f')}{R(2, 8, 2, 2, '#e45f2f')}{R(5, 8, 2, 2, '#e45f2f')}{R(8, 8, 1, 2, '#e45f2f')}{R(2, 11, 2, 2, '#e45f2f')}{R(5, 11, 2, 2, '#e45f2f')}{R(8, 11, 1, 2, '#e45f2f')}</>,
  picture: <><rect x=".5" y=".5" width="14" height="12" fill="#eef3f6" stroke="#9aa6b0" /><rect x="2" y="2" width="11" height="9" fill="#9fd0ea" /><path d="M2 8l4-2 7 2v3H2z" fill="#1f7a73" /></>,
  ods: <><path d="M1 3l4-2 3 1v10l-4 2-3-1z" fill="#e9c35a" stroke="#8a6f1f" strokeWidth=".6" /><path d="M9 4l3-3 1 2-3 3z" fill="#6b8ed6" /><path d="M9 8l3 1-3 3-2-2z" fill="#d65fc0" /><path d="M12 11l3 2-3 3-2-3z" fill="#e0a82a" /></>,
  unit: <><path d="M2 4h6v9H2z" fill="#2f8f4a" /><path d="M8 1l5 4.5L8 10z" fill="#3fbf4a" stroke="#186b20" strokeWidth=".5" /><circle cx="3" cy="14" r="2" fill="#e8c33a" /><rect x="8" y="9" width="4" height="4" fill="#3f74bd" /></>,
  errlist: <><rect x="2.5" y="2.5" width="10" height="12" fill="#e8dcc4" stroke="#6d6d6d" />{R(5, 1, 5, 3, '#d8b14a', '#6d5818')}<circle cx="11" cy="12" r="4" fill="#d9372a" /><path d="M9.3 10.3l3.4 3.4m0-3.4l-3.4 3.4" stroke="#fff" strokeWidth="1.1" /></>,
  find: <><rect x="2.5" y="1.5" width="11" height="10" fill="#f4f7fb" stroke="#4a6da7" />{R(3, 2, 10, 2, '#3f74bd')}{GrayLines({ x: 5, y: 5, n: 3, w: 6, c: '#667' })}<path d="M8 11h2v4H8zm3 0h2v4h-2z" fill="#333" /><path d="M9 11h3v2H9z" fill="#555" /></>,
  output: <><rect x="2.5" y="2.5" width="11" height="11" fill="#eef3fa" stroke="#4a6da7" />{GrayLines({ x: 5, y: 5, n: 3, w: 6, c: '#4a6da7' })}</>,
  findsym: <><path d="M1 6l4 3-3 5z" fill="#f0c84d" /><path d="M7 1l3 3-4 4-2-2z" fill="#f5f7fb" stroke="#456" strokeWidth=".6" /><path d="M10 5l4 2-3 3z" fill="#4a8fe0" /><path d="M7 11h2v4H7zm3 0h2v4h-2z" fill="#444" /></>,
  err: <><circle cx="8" cy="8" r="7" fill="#d9372a" stroke="#9e1f16" strokeWidth=".7" /><path d="M5.5 5.5l5 5m0-5l-5 5" stroke="#fff" strokeWidth="1.7" /></>,
  warn: <><path d="M8 .8L15.4 15H.6z" fill="#f8d81f" stroke="#8f7a10" strokeWidth=".8" /><rect x="7.1" y="5" width="1.8" height="6" fill="#000" /><rect x="7.1" y="12" width="1.8" height="1.8" fill="#000" /></>,
  info: <><circle cx="8" cy="8" r="7" fill="#eef4fb" stroke="#3c6db0" strokeWidth="1.3" /><rect x="7.2" y="6.5" width="1.7" height="6" fill="#2a5fb6" /><rect x="7.2" y="3.5" width="1.7" height="1.8" fill="#2a5fb6" /></>,
  install: <><circle cx="8" cy="8" r="7.4" fill="#b4451f" stroke="#6a2a14" strokeWidth=".6" /><circle cx="8" cy="8" r="5" fill="#d9652d" /><path d="M6.8 4h2.4v4h2L8 12 4.8 8h2z" fill="#fff" /></>,
  pub1: <><rect x="2.5" y="1.5" width="10" height="13" fill="#f1f3f6" stroke="#9aa3b0" /><circle cx="8" cy="8" r="3.6" fill="#a9b3c0" /><path d="M10 11l5 2-3 2z" fill="#8c98a8" /></>,
  pub2: <><rect x="2.5" y="3.5" width="10" height="11" fill="#f1f3f6" stroke="#9aa3b0" />{GrayLines({ x: 4, y: 6, n: 4, w: 6, c: '#a5aebb' })}<path d="M8 9l6-7 1.5 1.3-6 7-2.3 1z" fill="#8f9bab" /></>,
  cat: <>{R(1, 2, 5, 5, '#fff', '#2e5fa8')}{R(1, 9, 5, 5, '#fff', '#2e5fa8')}{R(3, 3, 1, 3, '#111')}{R(2, 4, 3, 1, '#111')}{R(3, 10, 1, 3, '#111')}{R(2, 11, 3, 1, '#111')}{GrayLines({ x: 8, y: 2, n: 3, w: 7, c: '#7f8da1' })}{GrayLines({ x: 8, y: 9, n: 3, w: 7, c: '#7f8da1' })}</>,
  az: <><text x="1" y="7.5" fontFamily={UI} fontSize="8.5" fontWeight="700" fill="#2b55a8">A</text><text x="1" y="15.5" fontFamily={UI} fontSize="8.5" fontWeight="700" fill="#a42a2a">Z</text><path d="M12 1v11" stroke="#111" strokeWidth="1.2" /><path d="M9.5 10.5h5L12 15z" fill="#111" /></>,
  plist: <><rect x="1.5" y="2.5" width="12" height="11" fill="#fff" stroke="#34588f" />{R(2, 3, 11, 2, '#9db8de')}{R(3, 6, 2, 1, '#222')}{R(6, 6, 6, 1, '#222')}{R(3, 8, 2, 1, '#222')}{R(6, 8, 6, 1, '#222')}{R(3, 10, 2, 1, '#222')}{R(6, 10, 6, 1, '#222')}</>,
  bolt: <><path d="M10 1L4 8h4l-3 7 8-9H9z" fill="#e9b53c" stroke="#b45b2a" strokeWidth=".6" /></>,
  pages: <><rect x=".5" y="1.5" width="14" height="12" fill="#c4c8cf" stroke="#8d939c" />{R(1, 2, 7, 3, '#a8adb6')}{R(3, 7, 9, 4, '#d9dce1', '#98a0a9')}</>,
  grid: <>{[2, 5, 8, 11, 14].map(x => <path key={x} d={`M${x} 1v14M1 ${x}h14`} stroke="#3b67c2" strokeWidth="1" />)}</>,
  zlayout: <><rect x="4.5" y="3.5" width="7" height="7" fill="#fff" stroke="#1e2a55" /><path d="M1 7h14M8 0v14M1 12h14" stroke="#3b67c2" /></>,
  zlines: <><rect x="1.5" y="1.5" width="13" height="13" fill="#eaf0fb" stroke="#3b67c2" />{R(2, 4, 12, 1, '#3b67c2')}{R(2, 7, 12, 1, '#3b67c2')}{R(2, 10, 12, 1, '#3b67c2')}{R(4, 2, 1, 12, '#d0492a')}</>,
  zruler: <><path d="M1.5 1.5h13v4h-9v9h-4z" fill="#f6f6f6" stroke="#222" /><path d="M7 2v2M9 2v2M11 2v2M13 2v2M2 7h2M2 9h2M2 11h2M2 13h2" stroke="#222" /></>,
  hand: <path d="M6 14L2.5 9.5c-.8-1.3.8-2.2 1.7-1.2L6 10V3c0-1.3 1.8-1.3 1.8 0v4-5c0-1.3 1.9-1.3 1.9 0v5-4c0-1.3 1.9-1.3 1.9 0v4.2-2.6c0-1.2 1.7-1.2 1.7 0v6c0 2-1 4.4-2.3 5.4H7z" fill="#fff" stroke="#111" strokeWidth=".9" />,
  mag: <><circle cx="6.5" cy="6.5" r="5" fill="#cfe4f6" stroke="#6b8fb3" strokeWidth="1.4" /><path d="M10.5 10.5l4.6 4.6" stroke="#c3954a" strokeWidth="2.3" /></>,
  pin: <path d="M4 1h6M5 1v6M9 1v6M3.500 7.500h7M7 8v6" stroke="currentColor" fill="none" />,
  x: <path d="M3 3l8 8m0-8l-8 8" stroke="currentColor" strokeWidth="1.7" />,
};

const Ic = ({ n }) => <Svg s={16}>{icons[n]}</Svg>;

/* gray layout-toolbar glyphs: generated from small rects + guide lines */
const G = ({ rects = [], lines = [] }) => (
  <Svg s={16}>
    {rects.map((r, i) => <rect key={i} x={r[0] + .5} y={r[1] + .5} width={r[2]} height={r[3]} fill="#e9edf2" stroke="#7f8b9b" />)}
    {lines.map((l, i) => <path key={i} d={l} stroke="#6c7686" fill="none" />)}
  </Svg>
);
const gray = {
  frame: { rects: [[4, 4, 8, 8]], lines: ['M1 4.5h14M1 11.5h14M4.5 1v14M11.5 1v14'] },
  al: { rects: [[3, 3, 8, 3], [3, 9, 5, 3]], lines: ['M1.5 1v14'] },
  ac: { rects: [[4, 3, 8, 3], [5, 9, 6, 3]], lines: ['M8 1v14'] },
  ar: { rects: [[5, 3, 8, 3], [8, 9, 5, 3]], lines: ['M14.5 1v14'] },
  at: { rects: [[3, 3, 3, 9], [9, 3, 3, 6]], lines: ['M1 1.5h14'] },
  am: { rects: [[3, 3, 3, 10], [9, 5, 3, 6]], lines: ['M1 8h14'] },
  ab: { rects: [[3, 3, 3, 9], [9, 6, 3, 6]], lines: ['M1 14.5h14'] },
  sw: { rects: [[2, 2, 12, 4]], lines: ['M2 10h12M2 13h2M12 13h2M6 13l-2-2M10 13l2-2'] },
  sh: { rects: [[3, 2, 4, 12]], lines: ['M11 2v12M14 2v2M14 12v2'] },
  sb: { rects: [[4, 4, 8, 8]], lines: ['M1 1h3M12 1h3M1 15h3M12 15h3M1 1v3M15 1v3M1 12v3M15 12v3'] },
  sg: { rects: [[4, 4, 8, 8]], lines: ['M2 2l2 2M14 2l-2 2M2 14l2-2M14 14l-2-2'] },
  h1: { rects: [[1, 4, 3, 7], [7, 4, 3, 7], [12, 5, 3, 5]] },
  h2: { rects: [[1, 2, 3, 6], [7, 2, 3, 6]], lines: ['M1 12h5M3 10l-2 2 2 2M10 12h5M13 10l2 2-2 2'] },
  h3: { rects: [[2, 2, 3, 6], [9, 2, 3, 6]], lines: ['M1 12h6M9 12h6'] },
  h4: { rects: [[4, 2, 3, 6], [9, 2, 3, 6]], lines: ['M1 12h5M10 12h5'] },
  v1: { rects: [[5, 1, 6, 3], [5, 7, 6, 3], [5, 12, 6, 3]] },
  v2: { rects: [[2, 1, 6, 3], [2, 9, 6, 3]], lines: ['M12 1v5M10 3l2-2 2 2M12 10v5M10 13l2 2 2-2'] },
  v3: { rects: [[2, 2, 6, 3], [2, 10, 6, 3]], lines: ['M12 1v5M12 10v5'] },
  v4: { rects: [[2, 4, 6, 3], [2, 9, 6, 3]], lines: ['M12 1v5M12 10v5'] },
  ch: { rects: [[1, 1, 14, 14], [4, 6, 8, 3]], lines: ['M8 2v12'] },
  cv: { rects: [[1, 1, 14, 14], [6, 4, 4, 8]], lines: ['M2 8h12'] },
  f1: { rects: [[2, 2, 8, 8], [6, 6, 8, 8]] },
  f2: { rects: [[6, 6, 8, 8], [2, 2, 8, 8]] },
};
const item = (n, x) => ({ k: 'icon', n, x, w: 16 });
const gi = (n, x) => ({ k: 'gray', n, x, w: 16 });
const dd = x => ({ k: 'dd', x, w: 6 });
const sep = x => ({ k: 'sep', x, w: 1 });
const grip = x => ({ k: 'grip', x, w: 2 });
const over = x => ({ k: 'over', x, w: 7 });

const row1 = [
  grip(6), item('newproj', 23), dd(40), item('newitem', 57), dd(72), item('open', 90), item('save', 112), item('saveall', 134), sep(148),
  item('cut', 162), item('copy', 185), item('paste', 207), sep(222), item('undo', 235), dd(253), item('redo', 271), dd(289), item('back', 307), dd(321), item('fwd', 338),
  sep(354), item('play', 367), { k: 'combo', t: 'ExcludingSilv', x: 426.5, w: 89 }, sep(478), item('folderdoc', 492), { k: 'combo', t: 'HeaderImage', x: 599, w: 184 }, sep(698),
  item('solution', 712), item('props', 735), item('report', 758), item('w2', 779), item('tools', 801), item('browser', 824), item('build', 845), item('cmd', 867), dd(882), over(896),
];
const r2a = [
  grip(6), item('sparkdoc', 23), sep(39), item('t1', 53), item('t2', 73), item('t2', 95), sep(112), item('t3', 125), item('t4', 148), item('t4', 170), sep(185),
  item('w1', 197), item('w1', 219), item('w2', 242), item('w3', 265), item('w4', 288), item('w5', 310), sep(324), item('lines1', 337), item('lines2', 360), item('lines3', 381), over(399),
];
const r2b = [
  grip(410), gi('frame', 427), sep(443), gi('al', 457), gi('ac', 479), gi('ar', 501), sep(515), gi('at', 530), gi('am', 552), gi('ab', 574), sep(589),
  gi('sw', 603), gi('sh', 624), gi('sb', 646), gi('sg', 668), sep(683), gi('h1', 696), gi('h2', 718), gi('h3', 740), gi('h4', 763), sep(779),
  gi('v1', 793), gi('v2', 814), gi('v3', 837), gi('v4', 859), sep(874), gi('ch', 888), gi('cv', 910), sep(925), gi('f1', 939), gi('f2', 961), sep(976), item('lines1', 990), sep(1005), item('lines2', 1018), over(1036),
];
const r2c = [
  grip(1047), { k: 'text', t: 'Publish:', x: 1080, w: 46 }, { k: 'combo', t: 'Create Publish Settings', x: 1180.5, w: 149 }, item('pub1', 1268), item('pub2', 1291), over(1309),
];
const r2d = [grip(1319), item('install', 1337), { k: 'text', t: 'Install Web Components', x: 1414, w: 130 }, over(1494)];

const Items = ({ list, start }) => {
  let cur = start;
  return list.map((it, i) => {
    const ml = it.x - it.w / 2 - cur;
    cur = it.x + it.w / 2;
    const st = { marginLeft: ml, width: it.w };
    let body = null;
    if (it.k === 'icon') body = <Ic n={it.n} />;
    if (it.k === 'gray') body = <G {...gray[it.n]} />;
    if (it.k === 'dd') body = <Caret />;
    if (it.k === 'sep') body = <Sep />;
    if (it.k === 'grip') body = <Grip />;
    if (it.k === 'over') body = <Over />;
    if (it.k === 'text') body = it.t;
    if (it.k === 'combo') body = <Combo><span>{it.t}</span><Caret /></Combo>;
    return <Cell key={i} style={st}>{body}</Cell>;
  });
};

const menus = [
  [<><u>F</u>ile</>], [<><u>E</u>dit</>], [<><u>V</u>iew</>], [<>Teleri<u>k</u></>], [<><u>P</u>roject</>], [<><u>B</u>uild</>], [<><u>D</u>ebug</>], [<>Tea<u>m</u></>],
  [<>D<u>a</u>ta</>], [<><u>T</u>ools</>], [<>Te<u>s</u>t</>], [<><u>R</u>eSharper</>], [<>A<u>n</u>alyze</>], [<><u>W</u>indow</>], [<><u>H</u>elp</>],
];

const warnPts = [[140, 202], [1192.5, 202], [1201, 202], [140, 535], [184.6, 546], [202.5, 535], [593.6, 546], [611, 535], [662, 546], [679, 535], [1144, 546], [1194, 535], [1200, 535], [1194, 564]];

const BLUE = '#84a2e6', LIGHT = '#b1c5f3', GRAY = '#bfc2c9';
const vLines = [
  [123, 202, 487, BLUE], [131, 202, 487, GRAY], [140, 202, 487, LIGHT], [1183, 202, 487, LIGHT], [1191, 202, 487, GRAY], [1200.5, 202, 487, LIGHT],
  [185.5, 547, 142, LIGHT], [193.5, 547, 142, GRAY], [202.5, 535, 154, LIGHT], [603, 535, 154, GRAY], [663.5, 547, 142, LIGHT], [671.5, 547, 142, GRAY], [680.5, 535, 154, LIGHT],
];
const hLines = [
  [123, 202, 1078, BLUE], [131, 204, 1060, GRAY], [131, 207, 1060, LIGHT],
  [123, 535, 1078, BLUE], [131, 540, 1060, GRAY], [131, 542, 1060, LIGHT], [131, 564, 1060, LIGHT], [131, 569, 1060, '#9db5ec'],
  [123, 644, 1078, LIGHT], [123, 649, 1078, BLUE], [123, 689, 1078, BLUE],
];

const props = [
  ['(ApplicationSettings)', '', 0, 1], ['(Name)', 'shape2', 1], ['Action', '(No Action)'], ['Anchoring', 'Top, Bottom, Left, Right', 1], ['Angle', '0'],
  ['Bindings', '(1 Binding)', 1, 0, 'sel'], ['BookmarkId', ''], ['ConditionalFormatting', '(No FormattingRules)'], ['Docking', 'None'], ['DocumentMapText', ''],
  ['GenerateMember', 'True'], ['Location', '8.32cm, 0cm', 1, 1], ['Modifiers', 'Private'], ['ShapeType', 'Vertical Line', 1, 1, 'swatch'], ['Size', '0.3cm, 2.7cm', 1, 1],
  ['Stretch', 'True', 1], ['Style', '', 0, 1], ['StyleName', 'HeaderLine', 1], ['Visible', 'True'],
];

const errLines = [
  [74, 'System.InvalidCastException: Unable to cast transparent proxy to type \'Cassette.MSBuild.CreateBundlesCommand\'.', 65],
  [74, 'at Cassette.MSBuild.CreateBundlesCommand.CreateCommandInAppDomain(CreateBundlesCommand command, AppDomain appDomain)', 74],
  [74, 'at Cassette.MSBuild.CreateBundlesCommand.ExecuteInSeparateAppDomain(CreateBundlesCommand command)', 74],
  [74, 'at Cassette.MSBuild.CreateBundles.Execute()', 74],
  [74, 'at Microsoft.Build.BackEnd.TaskExecutionHost.Microsoft.Build.BackEnd.ITaskExecutionHost.Execute()', 74],
];

const bottomTabs = [
  ['unit', 'Unit Test Sessions', 121, 0, 3], ['errlist', 'Error List', 74, 1, 3], ['find', 'Find Results', 93, 0, 6], ['output', 'Output', 68, 0, 7],
  ['find', 'Find Results 1', 102, 0, 7], ['find', 'Find Results 2', 103, 0, 6], ['findsym', 'Find Symbol Results', 130, 0, 7],
];
const rightTabs = [['solution', 'Solution Explorer', 114, 0, 1], ['props', 'Properties', 82, 1, 7], ['team', 'Team Explorer', 105, 0, 8]];

export default function App() {
  return (
    <Shell>
      <Global />
      <TitleBar>
        <Svg s={16}><path d="M1 8c0-3 3.500-3 7 0s7 3 7 0-3.500-3-7 0-7 3-7 0z" fill="none" stroke="#5a3d9c" strokeWidth="2.400" /></Svg>
        <TitleText>PromappMvc - Microsoft Visual Studio (Administrator)</TitleText>
        <WinButtons>
          <WinBtn $w={29}><svg width="12" height="4"><rect width="12" height="4" fill="#dfe4ea" /></svg></WinBtn>
          <WinBtn $w={27}><svg width="12" height="12" viewBox="0 0 12 12"><rect x="1.500" y="3" width="7" height="7.500" fill="none" stroke="#e7ebef" strokeWidth="1.600" /><path d="M4 1h7v7" fill="none" stroke="#e7ebef" strokeWidth="1.400" /></svg></WinBtn>
          <WinBtn $w={47} $red><svg width="14" height="11" viewBox="0 0 14 11"><path d="M2 1l10 9m0-9L2 10" stroke="#fff" strokeWidth="2.400" /></svg></WinBtn>
        </WinButtons>
      </TitleBar>
      <MenuBar>{menus.map((m, i) => <MenuItem key={i}>{m[0]}</MenuItem>)}</MenuBar>
      <ToolArea>
        <ToolRow><Band $w={898}><Items list={row1} start={3} /></Band></ToolRow>
        <ToolRow>
          <Band $w={401}><Items list={r2a} start={3} /></Band>
          <Band $w={635}><Items list={r2b} start={406} /></Band>
          <Band $w={270}><Items list={r2c} start={1043} /></Band>
          <Band $w={183}><Items list={r2d} start={1315} /></Band>
        </ToolRow>
      </ToolArea>

      <Dock>
        <Rail>
          <RailTab $h={92}><Ic n="props" /><span>Data Sources</span></RailTab>
          <RailTab $h={67}><Ic n="tools" /><span>Toolbox</span></RailTab>
        </Rail>
        <CenterCol>
          <DocPane>
            <DocTabs>
              <DocTab $w={135} $pl={5}>ProcessPrintTwi.cs*</DocTab>
              <DocTab $w={178} $on $pl={3}>
                <span>ProcessPrintTwi.cs [Design]*</span>
                <span style={{ lineHeight: 0, color: '#666' }}><Svg s={14}>{icons.x}</Svg></span>
              </DocTab>
              <DocTab $w={195} $pl={5}>SearchResultItemViewModel.cs</DocTab>
              <DocTab $w={120} $pl={5}>EnumExtensions.cs</DocTab>
              <TabMenu><Caret $c="#dfe4ee" /></TabMenu>
            </DocTabs>
            <DocBody>
              <ViewTabs>
                <ViewTab $w={97} $on><Ic n="designer" />Designer</ViewTab>
                <ViewTab $w={94}><Ic n="preview" />Preview</ViewTab>
                <ViewTab $w={124}><Ic n="globe" />Html Preview</ViewTab>
              </ViewTabs>
              <RulerRow>
                {['-1', 0, 1, 2, 3, 4, 5, 6, 7, 8, 9, 10, 11, 12, 13, 14, 15, 16, 17, 18, 19, 20, 21, 22].map(n => <RulerCell key={n}>{n}</RulerCell>)}
                <RulerCm>cm</RulerCm>
              </RulerRow>
              <CanvasRow>
                <SideRuler>
                  {[0, 1, 2, 3, 4, 5, 6, 7, 8].map(n => <SideCell key={n}><span>{n}</span></SideCell>)}
                  <SideCm>cm</SideCm>
                </SideRuler>
                <Canvas>
                  <Sheet />
                  {hLines.map((l, i) => <Rule key={i} $x={l[0]} $y={l[1]} $w={l[2]} $h={1} $c={l[3]} />)}
                  {vLines.map((l, i) => <Rule key={i} $x={l[0]} $y={l[1]} $w={1} $h={l[2]} $c={l[3]} />)}

                  <RBox $x={143} $y={263} $w={615} $h={41} $fs={32} $b $col="#2e2e2e">{'{Parameters.ProcessGroupName.Value}'}</RBox>
                  <RBox $x={1038} $y={215} $w={142} $h={85} />
                  <Logo>
                    <LogoWord>pro<span>mapp</span></LogoWord>
                    <LogoTag>smarter processes</LogoTag>
                  </Logo>
                  <Floating $x={1039} $y={239}>
                    <Svg w={30} h={26}><path d="M5 3.500h20c1.500 0 2 1 2 2l-1.500 16c-.2 1.500-1 2-2.500 2" fill="none" stroke="#c6c7c9" strokeWidth="2" /><path d="M6 3L3 21c0 1 .5 2 2 2h6" fill="none" stroke="#c0c1c3" strokeWidth="3.600" /></Svg>
                  </Floating>
                  <RBox $x={786} $y={300} $w={381} $h={24} $fs={20.2} $col="#222">{'{Parameters.Stats.Value}'}</RBox>
                  <RBox $x={143} $y={445} $w={1037} $h={39} $fs={32} $b $center $col="#333">{'{Parameters.ProcessName.Value}'}</RBox>
                  <RBox $x={287} $y={497} $w={233} $h={22} $fs={28} $b $col="#000">KEY TASK</RBox>
                  <RBox $x={798} $y={501} $w={232} $h={24} $fs={28} $b $col="#000">DESCRIPTION</RBox>

                  <RBox $x={140} $y={547} $w={46} $h={22} $fs={20} $b $u>[=Fi</RBox>
                  <RBox $x={214} $y={547} $w={380} $h={22} $fs={20} $b $u>[=Fields.ProcessActivityName]</RBox>
                  <RBox $x={617} $y={547} $w={47} $h={22} $fs={20} $pl={1}>[=Fie</RBox>
                  <RBox $x={687} $y={547} $w={459} $h={22} $fs={19.8}>[=Fields.ChildProcessProcedureName]</RBox>
                  <RBox $x={708} $y={575} $w={200} $h={114} />
                  <RBox $x={123} $y={666} $w={102} $h={23} />
                  <RBox $x={242} $y={649} $w={823} $h={40} />
                  <RBox $x={1075} $y={649} $w={126} $h={40} />
                  <Floating $x={714} $y={581}><Ic n="picture" /></Floating>

                  <Rule $x={123} $y={612} $w={471} $h={1} $c={LIGHT} />
                  <DimLabel $x={339} $y={606}>8.32cm</DimLabel>
                  <Handle $x={594} $y={533} $w={3} $h={159} />
                  <Handle $x={611} $y={533} $w={3} $h={159} />
                  <Handle $x={594} $y={689} $w={20} $h={2} />
                  <Handle $x={594} $y={533} $w={8} $h={4} />
                  <Handle $x={607} $y={533} $w={7} $h={4} />
                  <Handle $x={591} $y={609} $w={6} $h={6} />
                  <Handle $x={611} $y={609} $w={6} $h={6} />
                  <Handle $x={591} $y={688} $w={7} $h={6} />
                  <Handle $x={610} $y={688} $w={7} $h={6} />
                  <DimLabel $x={598} $y={538} $v>0cm</DimLabel>
                  <DimLabel $x={598} $y={693} $v>00</DimLabel>

                  {warnPts.map((p, i) => <Marker key={i} $x={p[0]} $y={p[1]}><Ic n="warn" /></Marker>)}
                  <Floating $x={106} $y={202}><Ic n="section" /></Floating>
                  <Floating $x={106} $y={537}><Ic n="sectionR" /></Floating>
                </Canvas>
                <VScroll>
                  <ScrollUp $t={8} />
                  <ScrollThumb $t={64} $h={394} />
                  <ScrollDown $t={511} />
                </VScroll>
              </CanvasRow>
              <ZoomStrip>
                <ZoomBox><span>150%</span><Caret /></ZoomBox>
                <ZoomGrid><Ic n="grid" /></ZoomGrid>
                <ZToggle $ml={5}><Ic n="zlayout" /></ZToggle>
                <ZToggle><Ic n="zlines" /></ZToggle>
                <ZToggle><Ic n="zruler" /></ZToggle>
                <ZSep />
                <HandWrap><Ic n="hand" /></HandWrap>
                <ArrowL />
                <ZoomEnd><i /><Ic n="mag" /></ZoomEnd>
              </ZoomStrip>
              <Tray><Ic n="ods" /><span>objectDataSource1</span></Tray>
            </DocBody>
          </DocPane>

          <ErrPanel>
            <PanelHead>
              <span>Error List</span>
              <PanelCtl style={{ color: '#dfe5ef' }}><Caret $c="#dfe5ef" /><Svg s={14}>{icons.pin}</Svg><Svg s={14}>{icons.x}</Svg></PanelCtl>
            </PanelHead>
            <ErrBar>
              <ErrBtn $on $w={64}><Ic n="err" />1 Error</ErrBtn>
              <ErrSep $m="0 0 0 4px" />
              <ErrBtn $w={97} $ml={6}><Ic n="warn" />28 Warnings</ErrBtn>
              <ErrSep $m="0" />
              <ErrBtn $ml={6} $ls={-0.35}><Ic n="info" />0 Messages</ErrBtn>
            </ErrBar>
            <GridHead>
              <HeadCell $w={16} />
              <HeadCell $w={19} />
              <HeadCell $w={979}>Description</HeadCell>
              <HeadCell $w={120} $blue $pl={5}>File<SortMark $l={56} /></HeadCell>
              <HeadCell $w={70} $blue $pl={5}>Line<SortMark $l={33} /></HeadCell>
              <HeadCell $w={70} $blue $pl={5}>Column<SortMark $l={33} /></HeadCell>
              <HeadCell $w={120} $blue $pl={5}>Project<SortMark $l={56} /></HeadCell>
              <HeadScroll><ScrollUp $t={7} /></HeadScroll>
            </GridHead>
            <ErrBodyRow>
              <ErrBody>
                <ErrLine $in={0}>
                  <ErrMark><Ic n="err" /></ErrMark><ErrNum>25</ErrNum><span>The "CreateBundles" task failed unexpectedly.</span>
                </ErrLine>
                {errLines.map((l, i) => <ErrLine key={i} $in={l[2] - 27}>{l[1]}</ErrLine>)}
                <ErrProject>PromappMvc</ErrProject>
              </ErrBody>
              <VScroll>
                <ScrollThumb $t={2} $h={55} />
                <ScrollDown $t={84} />
              </VScroll>
            </ErrBodyRow>
          </ErrPanel>
          <TabStrip $pl={4}>
            {bottomTabs.map((t, i) => <StripTab key={i} $w={t[2]} $on={!!t[3]} $pl={t[4]}><Ic n={t[0]} />{t[1]}</StripTab>)}
          </TabStrip>
        </CenterCol>

        <RightCol>
          <PropPanel>
            <PropHead>
              <span>Properties</span>
              <PanelCtl style={{ color: '#5b5b5b' }}><Caret $c="#5b5b5b" /><Svg s={14}>{icons.pin}</Svg><Svg s={14}>{icons.x}</Svg></PanelCtl>
            </PropHead>
            <ObjBar>
              <ObjCombo><b>shape2</b><span>Telerik.Reporting.Shape</span><ObjDrop><Caret /></ObjDrop></ObjCombo>
            </ObjBar>
            <PropTools>
              <PropTool $w={20}><Ic n="cat" /></PropTool>
              <PropTool $w={23} $on><Ic n="az" /></PropTool>
              <PropSep $m="0 3px 0 3px" />
              <PropTool $w={23} $on><Ic n="plist" /></PropTool>
              <PropTool $w={22} $ml={1}><Ic n="bolt" /></PropTool>
              <PropSep $m="0 4px 0 3px" />
              <PropTool $w={18}><Ic n="pages" /></PropTool>
            </PropTools>
            <PropGrid>
              {props.map((r, i) => (
                <PropRow key={i}>
                  <Gutter>{r[3] ? <i /> : null}</Gutter>
                  <PropName $sel={r[4] === 'sel'}>{r[0]}</PropName>
                  <PropVal $b={!!r[2]}>
                    {r[4] === 'swatch' ? <ShapeSwatch /> : null}
                    {r[1]}
                    {r[4] === 'sel' ? <MoreBtn>...</MoreBtn> : null}
                  </PropVal>
                </PropRow>
              ))}
            </PropGrid>
            <DescPane>
              <div>Bindings</div>
              <div>Gets the collection of binding rules contained within the report item</div>
            </DescPane>
          </PropPanel>
          <TabStrip $pl={4}>
            {rightTabs.map((t, i) => <StripTab key={i} $w={t[2]} $on={!!t[3]} $pl={t[4]}><Ic n={t[0]} />{t[1]}</StripTab>)}
          </TabStrip>
        </RightCol>
      </Dock>
      <Status>Ready<Gripper /></Status>
    </Shell>
  );
}
